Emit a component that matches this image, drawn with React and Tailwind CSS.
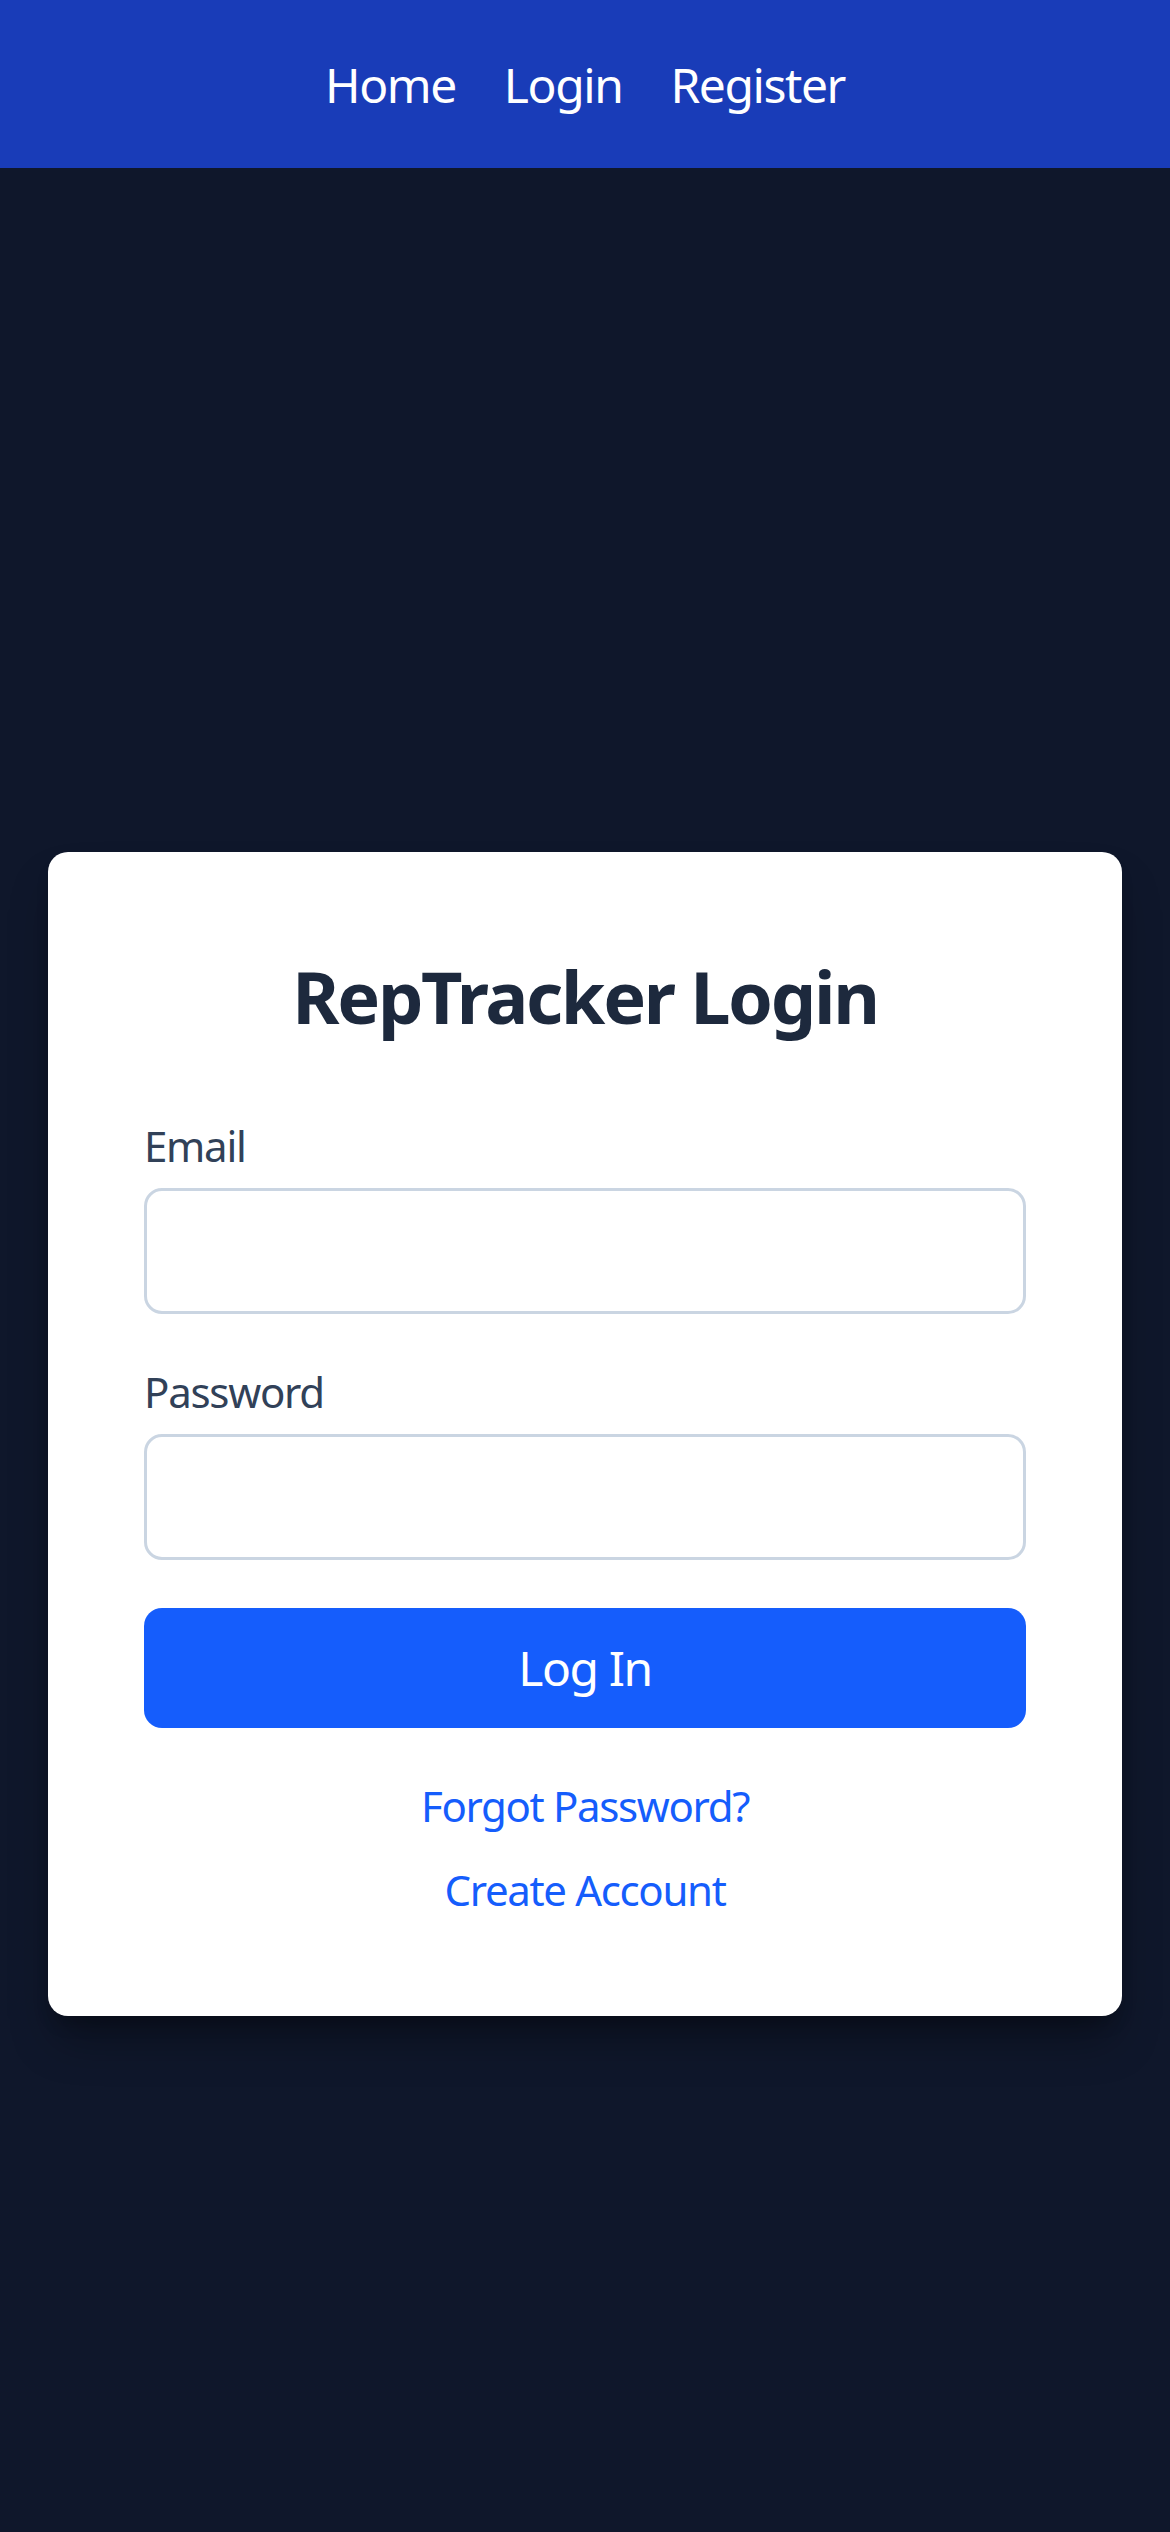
import React from "react";

export default function App() {
  const font = { fontFamily: '"Noto Sans", "Open Sans", sans-serif' };
  return (
    <div className="bg-[#0f172b] min-h-screen" style={font}>
      <nav className="bg-[#193cb8] h-[168px] flex items-center justify-center gap-[48px]">
        <a className="text-white text-[48px] leading-[72px] tracking-[-0.03em] pt-[2px]">Home</a>
        <a className="text-white text-[48px] leading-[72px] tracking-[-0.03em] pt-[2px]">Login</a>
        <a className="text-white text-[48px] leading-[72px] tracking-[-0.03em] pt-[2px]">Register</a>
      </nav>
      <main className="min-h-[2532px] flex items-center justify-center px-[48px]">
        <div className="w-full bg-white rounded-[20px] p-[96px] shadow-[0_30px_45px_-9px_rgba(0,0,0,0.35),0_12px_18px_-6px_rgba(0,0,0,0.2)]">
          <h1 className="text-[72px] leading-[96px] font-bold tracking-[-0.032em] text-[#1d293d] text-center mb-[72px]">
            RepTracker Login
          </h1>
          <div className="mb-[48px]">
            <label className="block text-[42px] leading-[60px] tracking-[-0.03em] text-[#314158] mb-[12px]">Email</label>
            <input
              type="email"
              className="block w-full h-[126px] border-[3px] border-[#cad5e2] rounded-[18px] px-[36px] text-[48px] outline-none"
            />
          </div>
          <div className="mb-[48px]">
            <label className="block text-[42px] leading-[60px] tracking-[-0.03em] text-[#314158] mb-[12px]">Password</label>
            <input
              type="password"
              className="block w-full h-[126px] border-[3px] border-[#cad5e2] rounded-[18px] px-[36px] text-[48px] outline-none"
            />
          </div>
          <button className="w-full h-[120px] bg-[#155dfc] text-white text-[48px] leading-[72px] tracking-[-0.03em] rounded-[18px]">
            Log In
          </button>
          <div className="mt-[48px] flex flex-col items-center gap-[24px]">
            <a className="text-[#155dfc] text-[42px] leading-[60px] tracking-[-0.032em]">Forgot Password?</a>
            <a className="text-[#155dfc] text-[42px] leading-[60px] tracking-[-0.032em]">Create Account</a>
          </div>
        </div>
      </main>
    </div>
  );
}
